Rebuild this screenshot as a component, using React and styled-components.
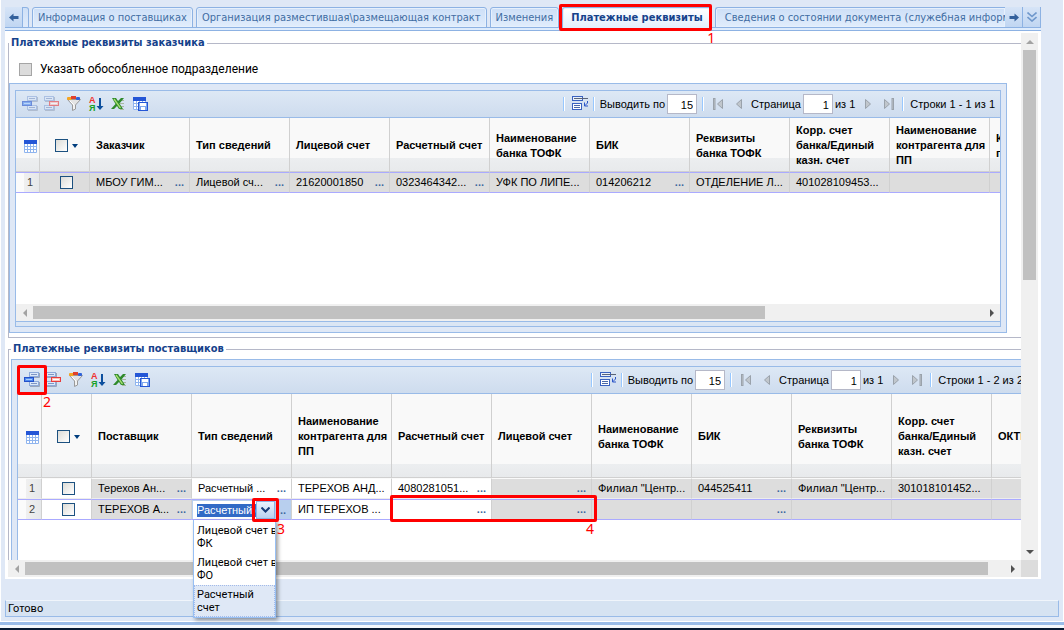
import React, { useEffect, useRef } from "react";
import styled, { createGlobalStyle, css } from "styled-components";

const tahoma = `Roboto, Tahoma, sans-serif`;
const tahomaWide = `"DejaVu Sans Condensed", Tahoma, sans-serif`;
const arial = `Arial, "Liberation Sans", sans-serif`;

const GlobalStyle = createGlobalStyle`
  *, *::before, *::after {
    box-sizing: border-box;
  }

  body {
    margin: 0;
    background: #dfe8f6;
    font: 11px ${tahoma};
    color: #000;
  }

  button, input {
    font: inherit;
    color: inherit;
  }

  button {
    padding: 0;
    border: 0;
    background: none;
  }

  svg {
    display: block;
    flex: none;
  }
`;

const Page = styled.div`
  position: relative;
  display: flex;
  flex-direction: column;
  height: 100vh;
  overflow: hidden;
`;

const Window = styled.main`
  flex: 1;
  min-height: 0;
  display: flex;
  flex-direction: column;
  padding: 7px 4px 4px;
  border: 1px solid #fff;
  border-top: 0;
  background: #dfe8f6;
`;

const WindowEdge = styled.div`
  height: 8px;
  border-top: 3px solid #99bbe8;
  border-bottom: 2px solid #071a33;
  background: #f4f8fd;
`;

const TabPanel = styled.section`
  flex: 1;
  min-height: 0;
  margin-right: 18px;
  display: flex;
  flex-direction: column;
`;

const TabStrip = styled.div`
  display: flex;
  gap: 3px;
  height: 24px;
  border-bottom: 1px solid #8db2e3;
  background: linear-gradient(#dfe8f6 20px, #8db2e3 20px, #8db2e3 21px, #deecfd 21px);
`;

const TabScroller = styled.button`
  flex: none;
  display: flex;
  align-items: center;
  justify-content: center;
  width: 18px;
  height: 21px;
  border: 1px solid #8db2e3;
  border-width: 0 1px 1px 0;
  background: linear-gradient(#d6e4f7, #c0d6f2);
`;

const TabScrollers = styled.div`
  display: flex;
  margin-left: -3px;
`;

const TabStub = styled.span`
  width: 6px;
  height: 21px;
  margin-left: -3px;
  border: 1px solid #8db2e3;
  border-left: 0;
  border-radius: 0 3px 0 0;
  background: linear-gradient(#cfe0f7, #dfebfb);
`;

const Tab = styled.button`
  position: relative;
  flex: none;
  height: 21px;
  padding: 0 5px;
  border: 1px solid #8db2e3;
  border-radius: 3px 3px 0 0;
  background: linear-gradient(#cddff7, #e1edfc);
  box-shadow: inset 0 0 0 1px #e6f0fc;
  color: #416da3;
  font-family: ${tahomaWide};
  line-height: 18px;
  white-space: nowrap;

  ${(props) =>
    props.$active &&
    css`
      height: 24px;
      padding: 0 8px 4px;
      border-bottom: 0;
      background: linear-gradient(#fff, #deecfd);
      color: #15428b;
      font-weight: bold;
    `}

  ${(props) =>
    props.$cut &&
    css`
      flex: 1;
      min-width: 0;
      padding: 0 0 0 9px;
      overflow: hidden;
      border-right: 0;
      border-radius: 3px 0 0 0;
      text-align: left;
    `}
`;

/* Red frames with step numbers, drawn over the controls */
const Mark = styled.span`
  position: absolute;
  z-index: 5;
  border: 3px solid #f00;
  border-radius: 2px;
  pointer-events: none;
`;

const TabMark = styled(Mark)`
  inset: -4px -1px 0 -4px;
`;

const ToolMark = styled(Mark)`
  inset: -4px;
`;

const TriggerMark = styled(Mark)`
  inset: -4px -5px;
`;

const CellMark = styled(Mark)`
  top: -5px;
  left: -2px;
  width: 207px;
  height: 27px;
`;

const Step = styled.span`
  position: absolute;
  top: calc(100% + 2px);
  left: ${(props) => props.$left || "calc(100% - 1px)"};
  color: #f00;
  font: 14px/16px "Noto Sans", sans-serif;
`;

const Pane = styled.div`
  flex: 1;
  min-height: 0;
  display: grid;
  grid-template: minmax(0, 1fr) 17px / minmax(0, 1fr) 17px;
  padding: 2px 3px;
  background: #fff;
`;

const PaneContent = styled.div`
  overflow: hidden;
  padding-top: 3px;
`;

const Corner = styled.div`
  background: #dcdcdc;
`;

const Bar = styled.div`
  display: flex;
  flex-direction: ${(props) => (props.$vertical ? "column" : "row")};
  background: #f0f0f0;
`;

const BarArrow = styled.button`
  flex: none;
  display: flex;
  align-items: center;
  justify-content: center;
  width: 17px;
  height: 17px;
  color: ${(props) => (props.$off ? "#a3a3a3" : "#505050")};
`;

const Track = styled.div`
  flex: 1;
  min-width: 0;
  padding: ${(props) => (props.$vertical ? "0 2px" : "2px 0")};
`;

const Thumb = styled.div`
  width: 100%;
  height: 100%;
  background: #c1c1c1;
`;

const Group = styled.fieldset`
  width: calc(100% + 20px);
  min-width: 0;
  margin: 0 0 4px;
  padding: 0 0 4px;
  border: 1px solid #b5b8c8;
`;

const SupplierGroup = styled(Group)`
  padding: 3px 5px 4px 2px;
`;

const Legend = styled.legend`
  margin-left: 0;
  padding: 0 2px;
  color: #15428b;
  font-family: ${tahomaWide};
  font-weight: bold;
  line-height: 14px;
`;

const CheckLine = styled.label`
  display: flex;
  align-items: center;
  gap: 8px;
  height: 33px;
  padding: 5px 0 0 10px;
  font-size: 12px;
`;

const CheckBox = styled.input`
  appearance: none;
  flex: none;
  display: block;
  width: 13px;
  height: 13px;
  margin: 0;
  border: 1px solid #1c5180;
  background: linear-gradient(135deg, #dcdcd7, #fff);

  &:disabled {
    border-color: #a5a5a5;
    background: #dcdcdc;
  }
`;

const GridPanel = styled.div`
  padding: 6px 5px 5px;
  border: 1px solid #99bbe8;
  background: #dfe8f6;
`;

const CustomerPanel = styled(GridPanel)`
  margin-right: 33px;
`;

const Grid = styled.div`
  border: 1px solid #99bbe8;
  background: #fff;
`;

const GridBody = styled.div`
  height: 186px;
  overflow: hidden;
`;

const GridFoot = styled.div`
  height: 5px;
  border-top: 1px solid #99bbe8;
  background: #dbe6f4;
`;

const Toolbar = styled.div`
  display: flex;
  align-items: center;
  height: 27px;
  padding: 0 5px 0 3px;
  border-bottom: 1px solid #99bbe8;
  background: linear-gradient(#dde8f5, #cedcee);
  font-family: ${arial};
  white-space: nowrap;
`;

const ToolButton = styled.button`
  position: relative;
  display: flex;
  align-items: center;
  justify-content: center;
  width: 22px;
  height: 22px;

  &:disabled svg {
    opacity: 0.6;
  }
`;

const PagerButton = styled(ToolButton)`
  width: 21px;
`;

const Spacer = styled.div`
  flex: 1;
`;

const Separator = styled.span`
  width: 2px;
  height: 14px;
  margin: 0 3px;
  border-left: 1px solid #98c8ff;
  border-right: 1px solid #fff;
`;

const PageField = styled.label`
  display: flex;
  align-items: center;
  gap: 2px;
  margin: 0 2px;
`;

const NumberInput = styled.input`
  width: 30px;
  height: 20px;
  padding: 2px 3px 0;
  border: 1px solid #b5b8c8;
  background: #fff;
  text-align: right;
`;

const RowsInfo = styled.span`
  margin-left: 3px;
`;

const Table = styled.table`
  width: 100%;
  table-layout: fixed;
  border-collapse: separate;
  border-spacing: 0;
  font-family: ${arial};
  text-align: left;

  th {
    height: ${(props) => props.$headHeight};
    padding: 2px 0 0 6px;
    border-right: 1px solid #d0d0d0;
    border-bottom: 1px solid #d0d0d0;
    background: linear-gradient(#eceef0, #e8eaec) bottom / 100% 13px no-repeat #f9f9f9;
    line-height: 15px;
    white-space: nowrap;
  }
`;

const HeadIcons = styled.div`
  display: flex;
  align-items: center;
  gap: 4px;
  padding: 2px 0 0 1px;
`;

const HeadCheck = styled(HeadIcons)`
  padding: 0 0 0 9px;
`;

const Row = styled.tr`
  td {
    border-top: 1px solid ${(props) => (props.$selected ? "#aaaaff" : "#fafafa")};
    border-bottom: 1px solid ${(props) => (props.$selected ? "#aaaaff" : "#ededed")};
  }
`;

const Cell = styled.td`
  position: relative;
  height: 21px;
  padding: 0 0 0 6px;
  border-right: 1px solid #d0d0d0;
  background: ${(props) => (props.$edit ? "#fff" : "#dddddd")};
  white-space: nowrap;
`;

const NumberCell = styled(Cell)`
  padding: 0 6px 2px 0;
  background: linear-gradient(90deg, #fbfbfb 8px, #f0f0f0 8px, #e6e8ea);
  color: #444;
  text-align: right;
`;

const CheckCell = styled(Cell)`
  padding-left: 20px;
`;

/* Not positioned, so the open list is not cut by the grid body */
const EditorCell = styled.td`
  height: 21px;
  padding: 0;
  border-right: 1px solid #d0d0d0;
  background: #b8cfee;
`;

const CellLine = styled.div`
  display: flex;
  align-items: center;
  justify-content: space-between;
  height: 19px;
  padding: 0 5px 2px 0;
`;

const MoreButton = styled.button`
  color: #3f6a9f;
  font-weight: bold;
`;

const Combo = styled.div`
  display: flex;
  align-items: center;
  width: 82px;
  height: 18px;
  margin: 1px 0 0 1px;
  background: #fff;
`;

const ComboInput = styled.input`
  flex: 1;
  min-width: 0;
  height: 13px;
  margin: 1px 0 0 4px;
  padding: 0;
  border: 0;
  outline: 0;
  background: none;
  line-height: 13px;

  &::selection {
    background: #316ac5;
    color: #fff;
  }
`;

const ComboTrigger = styled.button`
  position: relative;
  display: flex;
  align-items: center;
  justify-content: center;
  width: 19px;
  height: 18px;
  border: 1px solid #8db2e3;
  background: linear-gradient(#eaf2fd, #b9d2f0);
`;

const EditorLine = styled.div`
  display: flex;
  align-items: center;
  justify-content: space-between;
  height: 19px;
  padding-right: 5px;
`;

const Options = styled.ul`
  position: absolute;
  z-index: 4;
  width: 83px;
  margin: 1px 0 0 1px;
  padding: 1px 0 0;
  border: 1px solid #98c0f4;
  border-top-width: 0;
  background: #fff;
  box-shadow: 2px 2px 4px rgba(0, 0, 0, 0.4);
  list-style: none;
  font-family: ${tahoma};
`;

const Option = styled.li`
  padding: 2px 0 2px 2px;
  border: 1px dotted ${(props) => (props.$selected ? "#a3bae9" : "#fff")};
  border-right-width: ${(props) => (props.$selected ? "1px" : 0)};
  background: ${(props) => (props.$selected ? "#dfe8f6" : "#fff")};
  line-height: 13px;
  white-space: nowrap;
  overflow: hidden;
`;

const StatusBar = styled.footer`
  height: 17px;
  margin-top: 21px;
  padding-left: 2px;
  border: 1px solid #99bbe8;
  border-top-color: #f0f5fb;
  background: #d6e3f2;
  line-height: 15px;
`;

const Triangle = ({ points }) => (
  <svg width="8" height="8" viewBox="0 0 8 8" fill="currentColor">
    <polygon points={points} />
  </svg>
);

const arrows = {
  up: "0,6 4,2 8,6",
  down: "0,2 4,6 8,2",
  left: "6,0 2,4 6,8",
  right: "2,0 6,4 2,8",
};

const ScrollBar = ({ vertical, size, atStart }) => (
  <Bar $vertical={vertical}>
    <BarArrow $off={atStart} aria-label="Назад">
      <Triangle points={vertical ? arrows.up : arrows.left} />
    </BarArrow>
    <Track $vertical={vertical}>
      <Thumb style={vertical ? { height: size } : { width: size }} />
    </Track>
    <BarArrow aria-label="Вперед">
      <Triangle points={vertical ? arrows.down : arrows.right} />
    </BarArrow>
  </Bar>
);

const TabArrow = ({ flip }) => (
  <svg width="10" height="9" viewBox="0 0 10 9">
    <path
      d="M0 4.5 4.5 0.5V3H9.5V6H4.5V8.5Z"
      fill="#34619c"
      transform={flip ? "rotate(180 5 4.5)" : undefined}
    />
  </svg>
);

const Chevrons = () => (
  <svg width="10" height="10" viewBox="0 0 10 10" fill="none" stroke="#6f98cc" strokeWidth="1.6">
    <path d="M0.5 0.5 5 4.5 9.5 0.5M0.5 5 5 9 9.5 5" />
  </svg>
);

const Sheet = ({ x, y }) => (
  <>
    <rect x={x + 0.5} y={y + 0.5} width="9" height="4" fill="#dce8f8" stroke="#8eaada" />
    <path d={`M${x + 2} ${y + 2.5}H${x + 8}`} stroke="#7f96c4" />
    <path d={`M${x + 1} ${y + 5.5}H${x + 10.5}V${y + 1}`} stroke="#9aa6ba" fill="none" />
  </>
);

const AddIcon = () => (
  <svg width="16" height="16" viewBox="0 0 16 16">
    <Sheet x={5} y={0} />
    <Sheet x={5} y={9} />
    <rect x="0.5" y="5.5" width="9" height="4" fill="#4f8cf0" stroke="#2450c8" />
    <path d="M2 7.5H8" stroke="#a8ccff" />
  </svg>
);

const DeleteIcon = () => (
  <svg width="16" height="16" viewBox="0 0 16 16">
    <Sheet x={0} y={0} />
    <Sheet x={0} y={9} />
    <rect x="5.5" y="5.5" width="9" height="4" fill="#ffc0b8" stroke="#e83c3c" />
    <path d="M7 7.5H13" stroke="#fff" />
  </svg>
);

const FilterIcon = () => (
  <svg width="16" height="16" viewBox="0 0 16 16">
    <path d="M1.500 3.500 6.500 9V14.500L9.500 13V9L14.500 3.500Z" fill="#e4e4e4" stroke="#9a9a9a" />
    <path d="M4 5 8 9V13" stroke="#fff" fill="none" />
    <rect x="1" y="1" width="5" height="3" rx="1" fill="#f5a623" />
    <rect x="5" y="0" width="5" height="3" fill="#e0402c" />
    <rect x="10" y="1" width="4" height="3" rx="1" fill="#2f62d9" />
  </svg>
);

const SortIcon = () => (
  <svg width="16" height="16" viewBox="0 0 16 16">
    <text x="1" y="7" fill="#f03030" fontSize="9" fontWeight="bold" fontFamily="Liberation Sans">
      А
    </text>
    <text x="1" y="15" fill="#18a028" fontSize="9" fontWeight="bold" fontFamily="Liberation Sans">
      Я
    </text>
    <path d="M11 2H13V10H15.500L12 14 8.500 10H11Z" fill="#0c4f9e" />
  </svg>
);

const ExcelIcon = () => (
  <svg width="16" height="16" viewBox="0 0 16 16">
    <path d="M10 4.5H14M10 7.5H14M10 10.5H14M10 13.5H14" stroke="#a8b8a0" />
    <path d="M2 2H6L8 5 11 2H14L9.500 7.500 13 13H9L7 10 4 13H1L5.500 8Z" fill="#2f8a2c" />
    <path d="M4 3 10.500 12" stroke="#a8e070" strokeWidth="1.300" />
  </svg>
);

const TableIcon = ({ save }) => (
  <svg width="16" height="16" viewBox="0 0 16 16">
    <rect x="1" y="2" width="13" height="12" fill="#fff" />
    <path d="M1.500 4V13.500H13.500V4M4.500 5V13M7.500 5V13M10.500 5V13M2 7.500H13M2 10.500H13" fill="none" stroke="#8fb4ee" />
    <rect x="1" y="1" width="13" height="4" fill="#2456d6" />
    {save && (
      <>
        <rect x="6.500" y="6.500" width="9" height="8" fill="#7fa8ee" stroke="#2456d6" />
        <rect x="8" y="7" width="6" height="3" fill="#fff" />
        <rect x="9" y="11" width="4" height="3" fill="#fff" />
      </>
    )}
  </svg>
);

const PageSizeIcon = () => (
  <svg width="18" height="16" viewBox="0 0 18 16">
    <rect x="2.500" y="0.500" width="10" height="4" fill="#e8f0fb" stroke="#3a62c0" />
    <path d="M4 2.500H18" stroke="#5a6478" />
    <rect x="2.500" y="7.500" width="9" height="6" fill="#fff" stroke="#3a62c0" />
    <path d="M4 9.500H10M4 11.500H10" stroke="#4a68a8" />
    <path d="M17.500 5V7L14.500 10M14.500 6.500V10H18" fill="none" stroke="#2c56c8" />
  </svg>
);

const PagerIcon = ({ edge, flip }) => (
  <svg width="12" height="12" viewBox="0 0 12 12">
    <g
      fill="#c0c6cc"
      stroke="#9aa2ab"
      transform={flip ? "rotate(180 6 6)" : undefined}
    >
      <path d={edge ? "M10.500 1.500V10.500L5.500 6Z" : "M8.500 1.500V10.500L3.500 6Z"} />
      {edge && <rect x="1.500" y="0.500" width="1.500" height="11" />}
    </g>
  </svg>
);

const Caret = () => (
  <svg width="6" height="4" viewBox="0 0 6 4">
    <path d="M0 0H6L3 4Z" fill="#003e7e" />
  </svg>
);

const TriggerIcon = () => (
  <svg width="9" height="6" viewBox="0 0 9 6" fill="none" stroke="#183c78" strokeWidth="2">
    <path d="M0.500 0.500 4.500 4.500 8.500 0.500" />
  </svg>
);

const GridToolbar = ({ id, total, canEdit }) => (
  <Toolbar>
    <ToolButton aria-label="Добавить" disabled={!canEdit}>
      <AddIcon />
      {canEdit && (
        <ToolMark>
          <Step>2</Step>
        </ToolMark>
      )}
    </ToolButton>
    <ToolButton aria-label="Удалить" disabled={!canEdit}>
      <DeleteIcon />
    </ToolButton>
    <ToolButton aria-label="Фильтр">
      <FilterIcon />
    </ToolButton>
    <ToolButton aria-label="Сортировка">
      <SortIcon />
    </ToolButton>
    <ToolButton aria-label="Экспорт">
      <ExcelIcon />
    </ToolButton>
    <ToolButton aria-label="Сохранить вид">
      <TableIcon save />
    </ToolButton>
    <Spacer />
    <Separator />
    <ToolButton aria-label="Строк на странице">
      <PageSizeIcon />
    </ToolButton>
    <Separator />
    <PageField htmlFor={`${id}-size`}>
      Выводить по
      <NumberInput id={`${id}-size`} defaultValue="15" />
    </PageField>
    <Separator />
    <PagerButton aria-label="Первая страница">
      <PagerIcon edge />
    </PagerButton>
    <PagerButton aria-label="Предыдущая страница">
      <PagerIcon />
    </PagerButton>
    <PageField htmlFor={`${id}-page`}>
      Страница
      <NumberInput id={`${id}-page`} defaultValue="1" />
      из 1
    </PageField>
    <PagerButton aria-label="Следующая страница">
      <PagerIcon flip />
    </PagerButton>
    <PagerButton aria-label="Последняя страница">
      <PagerIcon edge flip />
    </PagerButton>
    <Separator />
    <RowsInfo>
      Строки 1 - {total} из {total}
    </RowsInfo>
  </Toolbar>
);

const TypeEditor = () => {
  const input = useRef(null);

  useEffect(() => {
    input.current.focus({ preventScroll: true });
    input.current.setSelectionRange(0, 14, "backward");
  }, []);

  return (
    <EditorCell>
      <EditorLine>
        <Combo>
          <ComboInput
            ref={input}
            role="combobox"
            aria-label="Тип сведений"
            aria-expanded="true"
            aria-controls="type-options"
            defaultValue="Расчетный счет"
          />
          <ComboTrigger aria-label="Открыть список">
            <TriggerIcon />
            <TriggerMark>
              <Step $left="22px">3</Step>
            </TriggerMark>
          </ComboTrigger>
        </Combo>
        <MoreButton>..</MoreButton>
      </EditorLine>
      <Options id="type-options" role="listbox">
        <Option role="option">
          Лицевой счет в<br />
          ФК
        </Option>
        <Option role="option">
          Лицевой счет в<br />
          ФО
        </Option>
        <Option role="option" aria-selected="true" $selected>
          Расчетный
          <br />
          счет
        </Option>
      </Options>
    </EditorCell>
  );
};

const DataCell = ({ text, more, edit, marked }) => (
  <Cell $edit={edit}>
    <CellLine>
      <span>{text}</span>
      {more && <MoreButton aria-label="Выбрать">...</MoreButton>}
    </CellLine>
    {marked && (
      <CellMark>
        <Step $left="193px">4</Step>
      </CellMark>
    )}
  </Cell>
);

const GridTable = ({ columns, rows, headHeight }) => (
  <Table $headHeight={headHeight}>
    <colgroup>
      <col width="24" />
      <col width="50" />
      {columns.map((column) => (
        <col key={column} width="100" />
      ))}
    </colgroup>
    <thead>
      <tr>
        <th aria-label="Номер">
          <HeadIcons>
            <TableIcon />
          </HeadIcons>
        </th>
        <th>
          <HeadCheck>
            <CheckBox type="checkbox" aria-label="Выбрать все" />
            <Caret />
          </HeadCheck>
        </th>
        {columns.map((column) => (
          <th key={column}>
            {column.split("\n").map((line, index) => (
              <React.Fragment key={line}>
                {index > 0 && <br />}
                {line}
              </React.Fragment>
            ))}
          </th>
        ))}
      </tr>
    </thead>
    <tbody>
      {rows.map((row, index) => (
        <Row key={index} $selected={row.selected}>
          <NumberCell>{index + 1}</NumberCell>
          <CheckCell $edit={row.edit}>
            <CheckBox type="checkbox" aria-label={`Строка ${index + 1}`} />
          </CheckCell>
          {row.cells.map((cell, i) =>
            cell.editor ? <TypeEditor key={i} /> : <DataCell key={i} {...cell} />
          )}
        </Row>
      ))}
    </tbody>
  </Table>
);

const WideTable = styled.div`
  width: 1074px;
`;

const SupplierBody = styled(GridBody)`
  height: 220px;
`;

const customerColumns = [
  "Заказчик",
  "Тип сведений",
  "Лицевой счет",
  "Расчетный счет",
  "Наименование\nбанка ТОФК",
  "БИК",
  "Реквизиты\nбанка ТОФК",
  "Корр. счет\nбанка/Единый\nказн. счет",
  "Наименование\nконтрагента для\nПП",
  "Код\nподразделения",
];

const customerRows = [
  {
    selected: true,
    cells: [
      { text: "МБОУ ГИМ...", more: true },
      { text: "Лицевой сч...", more: true },
      { text: "21620001850", more: true },
      { text: "0323464342...", more: true },
      { text: "УФК ПО ЛИПЕ..." },
      { text: "014206212", more: true },
      { text: "ОТДЕЛЕНИЕ Л..." },
      { text: "401028109453..." },
      {},
      {},
    ],
  },
];

const supplierColumns = [
  "Поставщик",
  "Тип сведений",
  "Наименование\nконтрагента для\nПП",
  "Расчетный счет",
  "Лицевой счет",
  "Наименование\nбанка ТОФК",
  "БИК",
  "Реквизиты\nбанка ТОФК",
  "Корр. счет\nбанка/Единый\nказн. счет",
  "ОКТМО",
];

const supplierRows = [
  {
    edit: true,
    cells: [
      { text: "Терехов Ан...", more: true },
      { text: "Расчетный ...", more: true, edit: true },
      { text: "ТЕРЕХОВ АНД...", edit: true },
      { text: "4080281051...", more: true, edit: true },
      { more: true },
      { text: 'Филиал "Центр...' },
      { text: "044525411", more: true },
      { text: 'Филиал "Центр...' },
      { text: "301018101452..." },
      {},
    ],
  },
  {
    edit: true,
    selected: true,
    cells: [
      { text: "ТЕРЕХОВ А...", more: true },
      { editor: true },
      { text: "ИП ТЕРЕХОВ ...", edit: true },
      { more: true, edit: true, marked: true },
      { more: true },
      {},
      { more: true },
      {},
      {},
      {},
    ],
  },
];

const App = () => (
  <Page>
    <GlobalStyle />
    <Window>
      <TabPanel>
        <TabStrip>
          <TabScroller aria-label="Предыдущие вкладки">
            <TabArrow />
          </TabScroller>
          <TabStub />
          <Tab>Информация о поставщиках</Tab>
          <Tab>Организация разместившая\размещающая контракт</Tab>
          <Tab>Изменения</Tab>
          <Tab $active>
            Платежные реквизиты
            <TabMark>
              <Step $left="145px">1</Step>
            </TabMark>
          </Tab>
          <Tab $cut>Сведения о состоянии документа (служебная информация)</Tab>
          <TabScrollers>
            <TabScroller aria-label="Следующие вкладки">
              <TabArrow flip />
            </TabScroller>
            <TabScroller aria-label="Все вкладки">
              <Chevrons />
            </TabScroller>
          </TabScrollers>
        </TabStrip>
        <Pane>
          <PaneContent>
            <Group>
              <Legend>Платежные реквизиты заказчика</Legend>
              <CheckLine>
                <CheckBox type="checkbox" disabled />
                Указать обособленное подразделение
              </CheckLine>
              <CustomerPanel>
                <Grid>
                  <GridToolbar id="customer" total={1} />
                  <GridBody>
                    <WideTable>
                      <GridTable columns={customerColumns} rows={customerRows} headHeight="54px" />
                    </WideTable>
                  </GridBody>
                  <ScrollBar size="77%" atStart />
                  <GridFoot />
                </Grid>
              </CustomerPanel>
            </Group>
            <SupplierGroup>
              <Legend>Платежные реквизиты поставщиков</Legend>
              <GridPanel>
                <Grid>
                  <GridToolbar id="supplier" total={2} canEdit />
                  <SupplierBody>
                    <WideTable>
                      <GridTable columns={supplierColumns} rows={supplierRows} headHeight="84px" />
                    </WideTable>
                  </SupplierBody>
                </Grid>
              </GridPanel>
            </SupplierGroup>
          </PaneContent>
          <ScrollBar vertical size="46.7%" atStart />
          <ScrollBar size="98.4%" atStart />
          <Corner />
        </Pane>
      </TabPanel>
      <StatusBar>Готово</StatusBar>
    </Window>
    <WindowEdge />
  </Page>
);

export default App;
